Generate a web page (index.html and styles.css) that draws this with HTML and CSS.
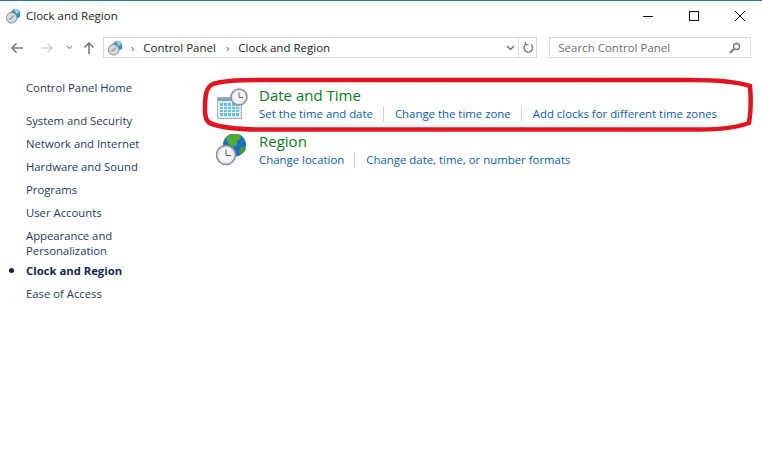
FILE: index.html
```html
<!DOCTYPE html>
<html lang="en">
<head>
    <meta charset="UTF-8">
    <title>Clock and Region</title>
    <link rel="stylesheet" href="styles.css">
</head>
<body>

<div class="window">
    <div class="title-bar">
        <div class="title">
            <svg class="small-icon" width="16" height="16" viewBox="0 0 18 18">
                <path d="M5 6 L10 1 Q15 0 17 4 L17 10 L11 13 Z" fill="#3f8fb8"/>
                <path d="M10 1 Q15 0 17 4 L13 7 Z" fill="#8fd0e8"/>
                <circle cx="7.500" cy="11" r="6" fill="#d5d8da" stroke="#7c8388"/>
                <path d="M7.500 11 L10 8.500 M7.500 11 L5 12.500" stroke="#4e565c" fill="none"/>
            </svg>
            <span>Clock and Region</span>
        </div>
        <div class="window-controls">
            <svg width="12" height="12" viewBox="0 0 12 12"><path d="M1 6.500H11" stroke="#111" fill="none"/></svg>
            <svg width="12" height="12" viewBox="0 0 12 12"><rect x="1.500" y="1.500" width="9" height="9" fill="none" stroke="#111"/></svg>
            <svg width="12" height="12" viewBox="0 0 12 12"><path d="M1 1L11 11M11 1L1 11" stroke="#111" fill="none"/></svg>
        </div>
    </div>

    <div class="nav-bar">
        <div class="nav-buttons">
            <svg width="14" height="12" viewBox="0 0 14 12"><path d="M13 6H2M6.500 1.500L2 6l4.500 4.500" stroke="#77797b" stroke-width="1.600" fill="none"/></svg>
            <svg class="gap-forward" width="14" height="12" viewBox="0 0 14 12"><path d="M1 6H12M7.500 1.500L12 6l-4.500 4.500" stroke="#d3d5d7" stroke-width="1.600" fill="none"/></svg>
            <svg class="gap-recent" width="7" height="5" viewBox="0 0 7 5"><path d="M1 1l2.500 2.500L6 1" stroke="#9b9d9f" stroke-width="1.200" fill="none"/></svg>
            <svg class="gap-up" width="12" height="14" viewBox="0 0 12 14"><path d="M6 13V2M1.500 6.500L6 2l4.500 4.500" stroke="#77797b" stroke-width="1.600" fill="none"/></svg>
        </div>
        <div class="address-box">
            <svg class="small-icon" width="16" height="16" viewBox="0 0 18 18">
                <path d="M5 6 L10 1 Q15 0 17 4 L17 10 L11 13 Z" fill="#3f8fb8"/>
                <path d="M10 1 Q15 0 17 4 L13 7 Z" fill="#8fd0e8"/>
                <circle cx="7.500" cy="11" r="6" fill="#d5d8da" stroke="#7c8388"/>
                <path d="M7.500 11 L10 8.500 M7.500 11 L5 12.500" stroke="#4e565c" fill="none"/>
            </svg>
            <span class="crumb-arrow">›</span>
            <span class="crumb">Control Panel</span>
            <span class="crumb-arrow">›</span>
            <span class="crumb">Clock and Region</span>
            <div class="address-end">
                <svg width="9" height="6" viewBox="0 0 9 6"><path d="M1 1l3.500 3.500L8 1" stroke="#6d6f71" stroke-width="1.400" fill="none"/></svg>
                <div class="refresh">
                    <svg width="12" height="13" viewBox="0 0 12 13"><path d="M4 3.200A4.300 4.300 0 1 0 9 3.500M3.500 0.800V3.600H6.500" stroke="#77797b" stroke-width="1.400" fill="none"/></svg>
                </div>
            </div>
        </div>
        <div class="search-box">
            <span>Search Control Panel</span>
            <svg width="12" height="12" viewBox="0 0 12 12"><circle cx="7.500" cy="4.500" r="3" fill="none" stroke="#77797b" stroke-width="1.400"/><path d="M5.200 6.800L1 11" stroke="#77797b" stroke-width="2" fill="none"/></svg>
        </div>
    </div>

    <div class="content">
        <ul class="side-nav">
            <li class="home"><a href="#">Control Panel Home</a></li>
            <li><a href="#">System and Security</a></li>
            <li><a href="#">Network and Internet</a></li>
            <li><a href="#">Hardware and Sound</a></li>
            <li><a href="#">Programs</a></li>
            <li><a href="#">User Accounts</a></li>
            <li class="two-line"><a href="#">Appearance and<br>Personalization</a></li>
            <li class="current"><a href="#">Clock and Region</a></li>
            <li><a href="#">Ease of Access</a></li>
        </ul>

        <div class="main">
            <div class="category">
                <svg class="cat-icon" width="34" height="34" viewBox="0 0 34 34">
                    <path d="M1.500 9.500H25.500V30.500H1.500Z" fill="#e3ebf2" stroke="#a4b3bf"/>
                    <path d="M2 10H25V13H2Z" fill="#7fa6c9"/>
                    <path d="M4 15H23V28H4Z" fill="#6cc0d6"/>
                    <path d="M7.500 15V28M11.500 15V28M15.500 15V28M19.500 15V28M4 18.500H23M4 21.500H23M4 24.500H23" stroke="#e6f4f8" fill="none"/>
                    <circle cx="23" cy="9" r="8" fill="#e4e6e8" stroke="#8b9196" stroke-width="1.500"/>
                    <circle cx="23" cy="9" r="5.500" fill="#f6f7f8"/>
                    <path d="M23 4.500V9.500H27" stroke="#5d656b" fill="none"/>
                </svg>
                <div>
                    <h2>Date and Time</h2>
                    <div class="links">
                        <a href="#">Set the time and date</a>
                        <a href="#">Change the time zone</a>
                        <a href="#">Add clocks for different time zones</a>
                    </div>
                </div>
            </div>
            <div class="category">
                <svg class="cat-icon" width="34" height="34" viewBox="0 0 34 34">
                    <circle cx="18.500" cy="11" r="11.500" fill="#1f6fc4"/>
                    <path d="M10 4Q16 -2 24 1Q26 5 21 7Q22 12 17 13Q12 11 10 4Z" fill="#52ab32"/>
                    <path d="M24 13Q29 12 30 15Q27 21 23 20Z" fill="#3f9a34"/>
                    <circle cx="10" cy="21" r="9.500" fill="#e4e6e8" stroke="#8b9196" stroke-width="1.500"/>
                    <circle cx="10" cy="21" r="7" fill="#f6f7f8"/>
                    <path d="M10 15.500V21.500H15" stroke="#5d656b" fill="none"/>
                </svg>
                <div>
                    <h2>Region</h2>
                    <div class="links">
                        <a href="#">Change location</a>
                        <a href="#">Change date, time, or number formats</a>
                    </div>
                </div>
            </div>
        </div>
    </div>
</div>

<!-- hand drawn marker ring on top of the screenshot -->
<svg class="marker" width="762" height="476" viewBox="0 0 762 476">
    <path d="M257 80 C240 80 222 81 213 84 C206 87 205 96 205 108 C205 117 206 122 212 124 C224 128 245 129.500 262 129.500 L700 129.500 C720 129.500 738 127 749 123 C751 112 751 98 750 86 C735 81 712 80 690 80 Z" fill="none" stroke="#e0141f" stroke-width="4.500"/>
</svg>

</body>
</html>
```

FILE: styles.css
```css
* {
    box-sizing: border-box;
}

body {
    margin: 0;
    width: 762px;
    height: 476px;
    overflow: hidden;
    position: relative;
    background-color: #fff;
    font-family: "Open Sans", "Noto Sans", sans-serif;
    font-size: 11.5px;
    color: #1e3a5f;
}

.window {
    height: 100%;
    border-top: 1px solid #2f78b0;
    display: flex;
    flex-direction: column;
}

.title-bar {
    height: 29px;
    padding: 0 16px 0 5px;
    display: flex;
    align-items: center;
    justify-content: space-between;
    color: #222;
}

.title {
    display: flex;
    align-items: center;
    gap: 5px;
}

.window-controls {
    display: flex;
    gap: 34px;
}

.nav-bar {
    height: 21px;
    margin: 7px 0 0 10px;
    padding-right: 11px;
    display: flex;
    align-items: stretch;
}

.nav-buttons {
    width: 93px;
    display: flex;
    align-items: center;
}

.gap-forward {
    margin-left: 16px;
}

.gap-recent {
    margin-left: 12px;
}

.gap-up {
    margin-left: 10px;
}

.address-box {
    width: 435px;
    border: 1px solid #d9d9d9;
    padding-left: 3px;
    display: flex;
    align-items: center;
    color: #222;
}

.crumb {
    margin-right: 2px;
}

.crumb-arrow {
    margin: 0 9px 0 8px;
    color: #666;
}

.address-end {
    margin-left: auto;
    display: flex;
    align-items: center;
    height: 100%;
    gap: 3px;
}

.refresh {
    height: 100%;
    width: 18px;
    border-left: 1px solid #d9d9d9;
    display: flex;
    align-items: center;
    justify-content: center;
}

.search-box {
    width: 202px;
    margin-left: 12px;
    border: 1px solid #d9d9d9;
    padding: 0 9px 0 8px;
    display: flex;
    align-items: center;
    justify-content: space-between;
    color: #6d6d6d;
}

.content {
    flex: 1;
    display: flex;
    font-size: 11.3px;
}

.side-nav {
    list-style: none;
    margin: 0;
    padding: 22px 0 0 26px;
    width: 204px;
}

.side-nav li {
    margin-bottom: 8px;
    line-height: 15px;
    position: relative;
}

.side-nav li.home {
    margin-bottom: 18px;
}

.side-nav li.two-line {
    margin-bottom: 5px;
}

.side-nav a {
    color: #1e3a5f;
    text-decoration: none;
}

.side-nav .current a {
    font-weight: bold;
    color: #14264a;
}

.side-nav .current::before {
    content: '';
    position: absolute;
    left: -17px;
    top: 5px;
    width: 5px;
    height: 5px;
    border-radius: 50%;
    background-color: #14264a;
}

.main {
    flex: 1;
    padding-top: 26px;
}

.category {
    height: 46px;
    display: flex;
    gap: 9px;
    padding-left: 12px;
}

.cat-icon {
    margin-top: 4px;
    flex-shrink: 0;
}

.category h2 {
    margin: 0;
    font-size: 15px;
    line-height: 22px;
    font-weight: normal;
    color: #0f7a1f;
}

.links {
    display: flex;
    font-size: 11.4px;
    line-height: 16px;
}

.links a {
    color: #0b5cad;
    text-decoration: none;
    padding-right: 10px;
    margin-right: 11px;
    border-right: 1px solid #d2d2d2;
}

.links a:last-child {
    border-right: none;
}

.marker {
    position: absolute;
    left: 0;
    top: 0;
    pointer-events: none;
}
```
